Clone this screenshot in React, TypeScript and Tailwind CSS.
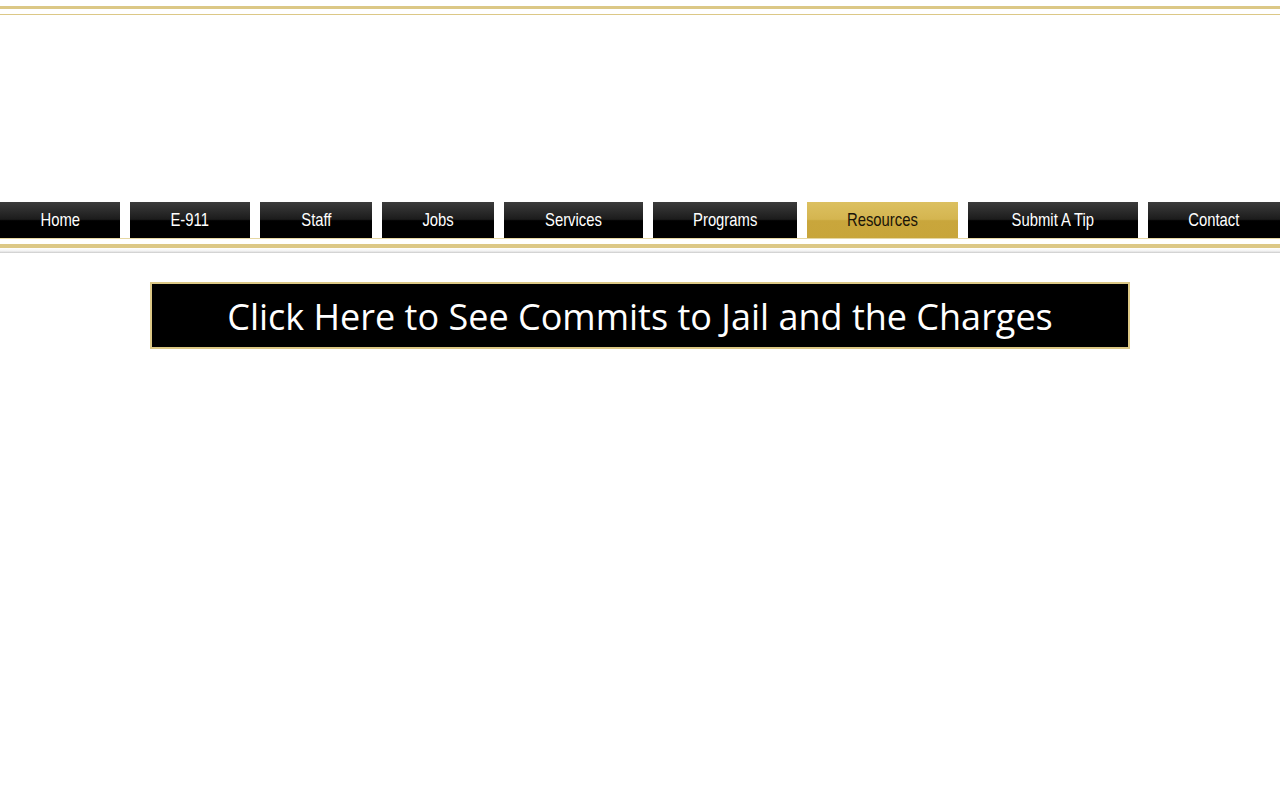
import React from "react";

const items = [
  { label: "Home", w: 120 },
  { label: "E-911", w: 120 },
  { label: "Staff", w: 112 },
  { label: "Jobs", w: 112 },
  { label: "Services", w: 139 },
  { label: "Programs", w: 144 },
  { label: "Resources", w: 151, active: true },
  { label: "Submit A Tip", w: 170 },
  { label: "Contact", w: 132 },
];

export default function App() {
  return (
    <div className="w-[1280px] h-[800px] bg-white overflow-hidden">
      <div className="h-[6px]" />
      <div className="h-[3px] bg-[#dcc886]" />
      <div className="h-[5px]" />
      <div className="h-px bg-[#dcc886]" />
      <div className="h-[187px]" />
      <nav className="flex gap-[10px] h-[36px]" style={{ fontFamily: '"Liberation Sans", Arial, sans-serif' }}>
        {items.map((it) =>
          it.active ? (
            <div
              key={it.label}
              className="shrink-0 flex items-center justify-center text-[19px] text-[#1a1408] bg-[linear-gradient(to_bottom,#dcc060_0%,#d4b550_48%,#c9a63c_52%,#c8a53a_100%)]"
              style={{ width: it.w }}
            >
              <span className="inline-block scale-x-[0.78] whitespace-nowrap">{it.label}</span>
            </div>
          ) : (
            <div
              key={it.label}
              className="shrink-0 flex items-center justify-center text-[19px] text-white bg-[linear-gradient(to_bottom,#3c3c3c_0%,#1c1c1c_48%,#000_52%,#000_100%)]"
              style={{ width: it.w }}
            >
              <span className="inline-block scale-x-[0.78] whitespace-nowrap">{it.label}</span>
            </div>
          )
        )}
      </nav>
      <div className="h-px bg-[#e6d7a3]" />
      <div className="h-[5px]" />
      <div className="h-[4px] bg-[#dcc886]" />
      <div className="h-[5px] bg-[linear-gradient(to_bottom,#ffffff,#f2f2f2_60%,#c9c9c9)]" />
      <div className="h-[29px]" />
      <div className="ml-[150px] w-[980px] h-[67px] border-2 border-[#dcc886] bg-black flex items-center justify-center">
        <span className="text-white text-[36px] leading-none font-medium pt-[3px]" style={{ fontFamily: '"Open Sans", "Noto Sans", sans-serif' }}>
          Click Here to See Commits to Jail and the Charges
        </span>
      </div>
    </div>
  );
}
